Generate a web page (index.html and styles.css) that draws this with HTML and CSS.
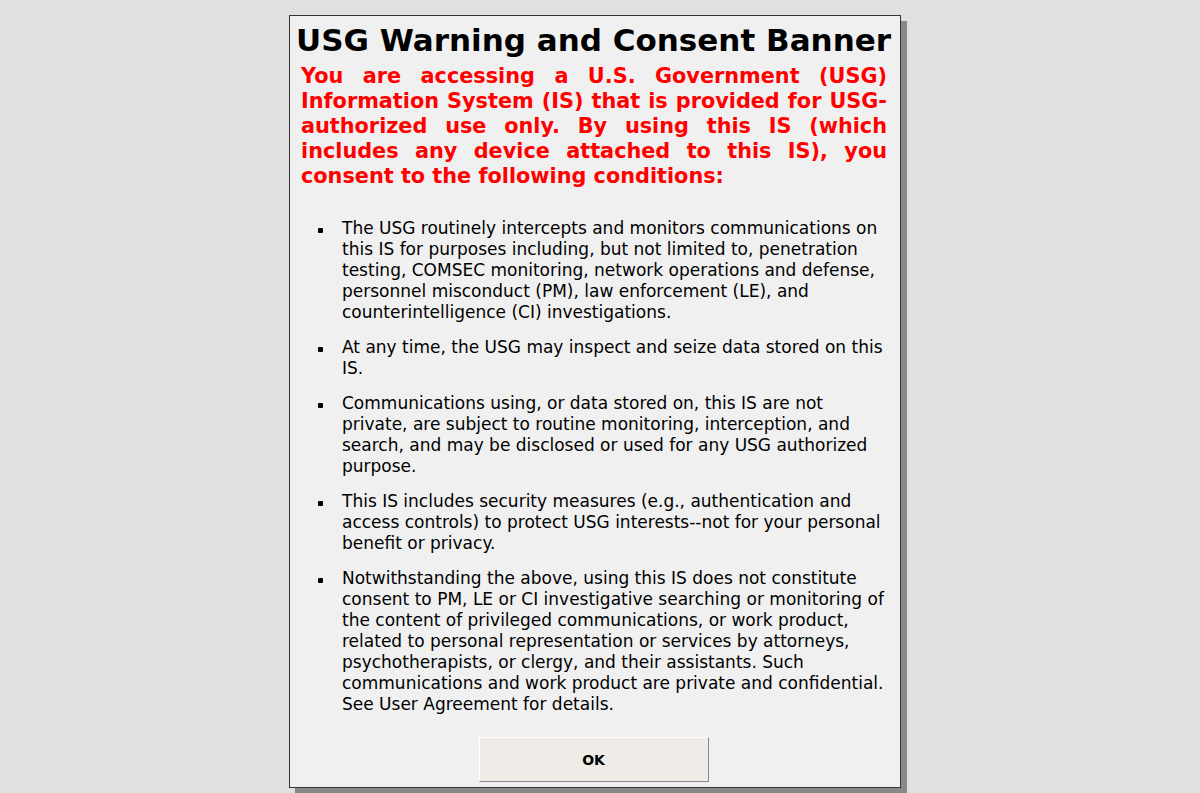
FILE: index.html
```html
<!DOCTYPE html>
<html lang="en">
<head>
  <meta charset="UTF-8">
  <title>USG Warning and Consent Banner</title>
  <link rel="stylesheet" href="styles.css">
</head>
<body>
  <div class="dialog">
    <h1>USG Warning and Consent Banner</h1>
    <p class="intro">You are accessing a U.S. Government (USG) Information System (IS) that is provided for USG-authorized use only. By using this IS (which includes any device attached to this IS), you consent to the following conditions:</p>
    <ul class="terms">
      <li>The USG routinely intercepts and monitors communications on this IS for purposes including, but not limited to, penetration testing, COMSEC monitoring, network operations and defense, personnel misconduct (PM), law enforcement (LE), and counterintelligence (CI) investigations.</li>
      <li>At any time, the USG may inspect and seize data stored on this IS.</li>
      <li>Communications using, or data stored on, this IS are not private, are subject to routine monitoring, interception, and search, and may be disclosed or used for any USG authorized purpose.</li>
      <li>This IS includes security measures (e.g., authentication and access controls) to protect USG interests--not for your personal benefit or privacy.</li>
      <li>Notwithstanding the above, using this IS does not constitute consent to PM, LE or CI investigative searching or monitoring of the content of privileged communications, or work product, related to personal representation or services by attorneys, psychotherapists, or clergy, and their assistants. Such communications and work product are private and confidential. See User Agreement for details.</li>
    </ul>
    <div class="actions">
      <button type="button" class="ok">OK</button>
    </div>
  </div>
</body>
</html>
```

FILE: styles.css
```css
html, body { height: 100%; }
body { margin: 0; background: #e0e0e0; font-family: "DejaVu Sans", sans-serif; display: flex; justify-content: center; overflow: hidden; }
.dialog { width: 612px; margin: 15px 10px 0 0; background: #f0f0f0; border: 1px solid #333; box-shadow: 6px 6px 0 #888; padding: 0 14px 0 11px; box-sizing: border-box; height: 773px; }
h1 { margin: 6px -10px 0; font-size: 31px; text-align: center; white-space: nowrap; }
.intro { margin: 6px -1px 0 0; color: #ff0000; font-weight: bold; font-size: 20.8px; line-height: 25px; text-align: justify; }
.terms { margin: 29px 0 0; padding-left: 41px; font-size: 17px; line-height: 21px; list-style: none; }
.terms li { margin-bottom: 14px; position: relative; }
.terms li::before { content: ""; position: absolute; left: -24px; top: 10px; width: 5px; height: 5px; background: #000; border-radius: 1px; }
.actions { display: flex; justify-content: center; margin-top: 22px; }
.ok { width: 230px; height: 45px; background: #efece8; border: 1px solid; border-color: #fff #888 #888 #fff; font-family: "DejaVu Sans", sans-serif; font-weight: bold; font-size: 14px; color: #000; }
```
